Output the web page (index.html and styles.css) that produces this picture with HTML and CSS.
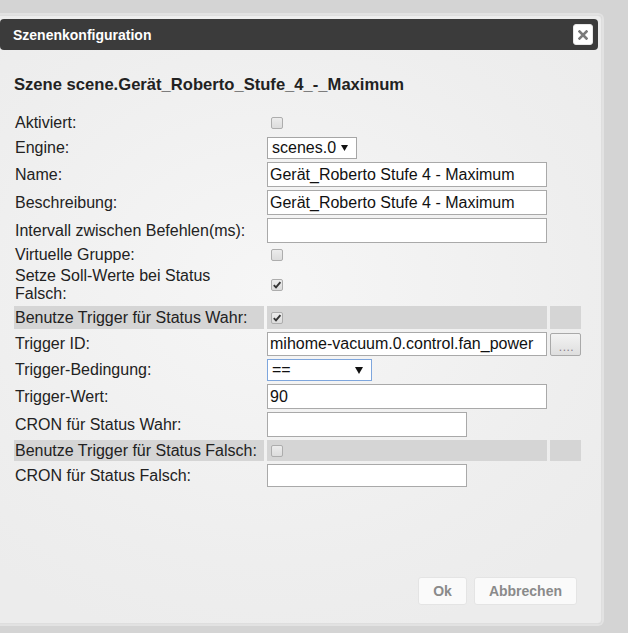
FILE: index.html
```html
<!DOCTYPE html>
<html lang="de">
<head>
<meta charset="utf-8">
<title>Szenenkonfiguration</title>
<link rel="stylesheet" href="styles.css">
</head>
<body>
<div class="dialog">
  <div class="titlebar">
    <span class="title">Szenenkonfiguration</span>
    <button class="close" type="button" aria-label="Schließen">
      <svg width="10" height="10" viewBox="0 0 10 10"><path d="M1.5 1.5 L8.5 8.5 M8.5 1.5 L1.5 8.5" stroke="#7a7a7a" stroke-width="2.6" stroke-linecap="square"/></svg>
    </button>
  </div>
  <div class="content">
    <h3 class="heading">Szene scene.Gerät_Roberto_Stufe_4_-_Maximum</h3>
    <table class="form">
      <tr class="row-check">
        <td class="lbl">Aktiviert:</td>
        <td class="val"><span class="cb"></span></td>
        <td class="extra"></td>
      </tr>
      <tr class="row-select">
        <td class="lbl">Engine:</td>
        <td class="val"><div class="select sel-engine"><span>scenes.0</span><svg width="7" height="6" viewBox="0 0 7 6"><path d="M0 0 H7 L3.5 6 Z" fill="#111"/></svg></div></td>
        <td class="extra"></td>
      </tr>
      <tr class="row-input">
        <td class="lbl">Name:</td>
        <td class="val"><div class="input">Gerät_Roberto Stufe 4 - Maximum</div></td>
        <td class="extra"></td>
      </tr>
      <tr class="row-input">
        <td class="lbl">Beschreibung:</td>
        <td class="val"><div class="input">Gerät_Roberto Stufe 4 - Maximum</div></td>
        <td class="extra"></td>
      </tr>
      <tr class="row-input">
        <td class="lbl">Intervall zwischen Befehlen(ms):</td>
        <td class="val"><div class="input"></div></td>
        <td class="extra"></td>
      </tr>
      <tr class="row-check row-check-tight">
        <td class="lbl">Virtuelle Gruppe:</td>
        <td class="val"><span class="cb"></span></td>
        <td class="extra"></td>
      </tr>
      <tr class="row-multi">
        <td class="lbl">Setze Soll-Werte bei Status<br>Falsch:</td>
        <td class="val"><span class="cb checked"><svg width="10" height="10" viewBox="0 0 10 10"><path d="M1.8 5.2 L4 7.4 L8.4 2.2" stroke="#333" stroke-width="1.9" fill="none"/></svg></span></td>
        <td class="extra"></td>
      </tr>
      <tr class="row-band">
        <td class="lbl">Benutze Trigger für Status Wahr:</td>
        <td class="val"><span class="cb checked"><svg width="10" height="10" viewBox="0 0 10 10"><path d="M1.8 5.2 L4 7.4 L8.4 2.2" stroke="#333" stroke-width="1.9" fill="none"/></svg></span></td>
        <td class="extra"></td>
      </tr>
      <tr class="row-id">
        <td class="lbl">Trigger ID:</td>
        <td class="val"><div class="input">mihome-vacuum.0.control.fan_power</div></td>
        <td class="extra"><button class="pick" type="button">....</button></td>
      </tr>
      <tr class="row-cond">
        <td class="lbl">Trigger-Bedingung:</td>
        <td class="val"><div class="select sel-cond"><span>==</span><svg width="8" height="7" viewBox="0 0 8 7"><path d="M0 0 H8 L4 7 Z" fill="#111"/></svg></div></td>
        <td class="extra"></td>
      </tr>
      <tr class="row-input">
        <td class="lbl">Trigger-Wert:</td>
        <td class="val"><div class="input">90</div></td>
        <td class="extra"></td>
      </tr>
      <tr class="row-input">
        <td class="lbl">CRON für Status Wahr:</td>
        <td class="val"><div class="input short"></div></td>
        <td class="extra"></td>
      </tr>
      <tr class="row-band row-band-low">
        <td class="lbl">Benutze Trigger für Status Falsch:</td>
        <td class="val"><span class="cb"></span></td>
        <td class="extra"></td>
      </tr>
      <tr class="row-last">
        <td class="lbl">CRON für Status Falsch:</td>
        <td class="val"><div class="input short"></div></td>
        <td class="extra"></td>
      </tr>
    </table>
  </div>
  <div class="buttons">
    <button class="btn" type="button">Ok</button>
    <button class="btn" type="button">Abbrechen</button>
  </div>
</div>
</body>
</html>
```

FILE: styles.css
```css
html, body {
  margin: 0;
  padding: 0;
}
body {
  background: #d4d4d4;
  font-family: "Liberation Sans", Arial, sans-serif;
  color: #222;
  height: 633px;
  overflow: hidden;
}
.dialog {
  box-sizing: border-box;
  margin: 15px 0 0 -4px;
  width: 606px;
  height: 609px;
  padding: 3px;
  border: 1px solid #dedede;
  border-radius: 4px;
  background: radial-gradient(ellipse 70% 60% at 45% 45%, #f6f6f6 0%, #eeeeee 75%, #ececec 100%);
  box-shadow: 0 0 0 2px #e2e2e2;
  display: flex;
  flex-direction: column;
}
.titlebar {
  height: 31px;
  background: #3b3b3b;
  border-radius: 4px;
  display: flex;
  align-items: center;
  justify-content: space-between;
  padding: 0 5px 0 13px;
  flex-shrink: 0;
}
.title {
  color: #fff;
  font-weight: bold;
  font-size: 14px;
}
.close {
  width: 20px;
  height: 21px;
  padding: 0;
  border: 1px solid #e8e8e8;
  border-radius: 3px;
  background: #fff;
  display: flex;
  align-items: center;
  justify-content: center;
}
.content {
  padding: 25px 0 0 11px;
}
.heading {
  margin: 0 0 17px 0;
  padding-left: 3px;
  font-size: 16.6px;
  line-height: 20px;
  font-weight: bold;
  color: #222;
}
.form {
  border-collapse: separate;
  border-spacing: 3px;
  margin-top: -3px;
  font-size: 16px;
}
.form td {
  padding: 0;
  vertical-align: middle;
}
.lbl {
  width: 249px;
  padding-left: 1px !important;
  line-height: 18px;
}
.val {
  width: 280px;
}
.extra {
  width: 31px;
}
.row-check td { height: 21px; }
.row-check-tight td { height: 18px; }
.row-select td { height: 23px; }
.row-input td { height: 25px; }
.row-multi td { height: 35px; }
.row-band td { height: 23px; background: #d5d5d5; }
.row-band-low td { height: 21px; }
.row-id td { height: 24px; }
.row-cond td { height: 22px; }
.row-last td { height: 23px; }

.cb {
  box-sizing: border-box;
  display: flex;
  align-items: center;
  justify-content: center;
  width: 12px;
  height: 12px;
  margin-left: 4px;
  border: 1px solid #adadad;
  border-radius: 2px;
  background: linear-gradient(#ececec, #dcdcdc);
}

.input {
  box-sizing: border-box;
  width: 280px;
  height: 25px;
  border: 1px solid #a9a9a9;
  background: #fff;
  padding: 0 2px;
  font-size: 16px;
  line-height: 23px;
  color: #111;
  white-space: nowrap;
  overflow: hidden;
}
.row-id .input { height: 24px; line-height: 22px; }
.row-last .input { height: 23px; }
.input.short { width: 200px; }

.select {
  box-sizing: border-box;
  height: 22px;
  border: 1px solid #a6a6a6;
  background: #fff;
  display: flex;
  align-items: center;
  justify-content: space-between;
  font-size: 16px;
  color: #111;
}
.sel-engine {
  width: 90px;
  padding: 0 8px 0 4px;
}
.sel-cond {
  width: 105px;
  padding: 0 8px 0 4px;
  border-color: #7ea6dd;
}
.pick {
  box-sizing: border-box;
  display: block;
  width: 31px;
  height: 23px;
  padding: 5px 0 0 2px;
  border: 1px solid #a9a9a9;
  border-radius: 2px;
  background: linear-gradient(#f3f3f3, #dedede);
  color: #8a7f8a;
  font-family: "Liberation Sans", Arial, sans-serif;
  font-size: 12px;
  line-height: 12px;
  letter-spacing: 0.5px;
  text-align: center;
}
.buttons {
  margin-top: auto;
  display: flex;
  justify-content: flex-end;
  gap: 7px;
  padding: 0 21px 15px 0;
}
.btn {
  box-sizing: border-box;
  height: 28px;
  padding: 0 14px;
  border: 1px solid #e4e4e4;
  border-radius: 3px;
  background: #fafafa;
  color: #8a8a8a;
  font-family: "Liberation Sans", Arial, sans-serif;
  font-weight: bold;
  font-size: 14px;
}
```
